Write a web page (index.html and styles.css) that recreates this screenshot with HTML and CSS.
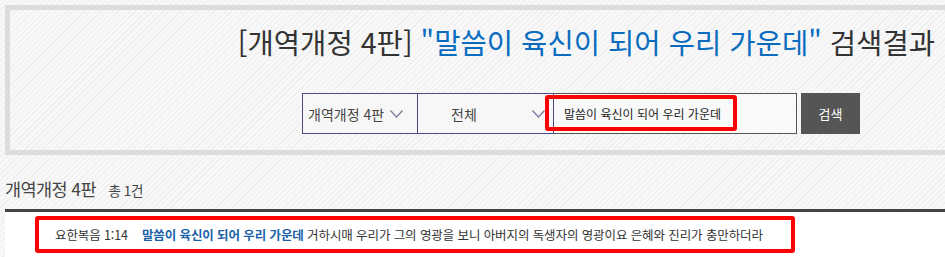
FILE: index.html
```html
<!DOCTYPE html>
<html lang="ko">
	<head>
		<meta charset="utf-8">
		<title>검색결과</title>
		<link rel="stylesheet" href="styles.css">
	</head>
	<body>
		<div class="search-box">
			<h1 class="search-title">[개역개정 4판] <span class="keyword">"말씀이 육신이 되어 우리 가운데"</span> 검색결과</h1>
			<form class="search-row">
				<div class="select select-version">
					<span>개역개정 4판</span>
					<svg class="chevron" width="13" height="8" viewBox="0 0 13 8"><polyline points="0.5,0.5 6.5,7 12.5,0.5" /></svg>
				</div>
				<div class="select select-book">
					<span>전체</span>
					<svg class="chevron" width="13" height="8" viewBox="0 0 13 8"><polyline points="0.5,0.5 6.5,7 12.5,0.5" /></svg>
				</div>
				<div class="search-input">말씀이 육신이 되어 우리 가운데</div>
				<div class="search-btn">검색</div>
				<div class="mark mark-input"></div>
			</form>
		</div>

		<div class="result-head">
			<span class="result-version">개역개정 4판</span>
			<span class="result-count">총 1건</span>
		</div>
		<div class="result-list">
			<p class="result-item"><span class="verse-ref">요한복음 1:14</span><b class="hit">말씀이 육신이 되어 우리 가운데</b> 거하시매 우리가 그의 영광을 보니 아버지의 독생자의 영광이요 은혜와 진리가 충만하더라</p>
		</div>
	</body>
</html>
```

FILE: styles.css
```css
body {
	margin: 0;
	font-family: "Noto Sans CJK KR", "Noto Sans", sans-serif;
	color: #333;
	background: repeating-linear-gradient(135deg, #f8f8f8 0px, #f8f8f8 3px, #eeeeee 3px, #eeeeee 4px);
}
.search-box {
	margin: 5px 0 0 5px;
	border: 5px solid #dcdcdc;
	border-right: none;
	padding-top: 12px;
	box-sizing: border-box;
	height: 150px;
	position: relative;
}
.search-title {
	margin: 0;
	padding-right: 10px;
	text-align: right;
	font-size: 28.6px;
	font-weight: normal;
	line-height: 40px;
	color: #333;
	white-space: nowrap;
}
.keyword {
	color: #0a6cbf;
}
.search-row {
	position: relative;
	display: flex;
	margin: 31px 0 0 292px;
	height: 41px;
}
.select {
	display: flex;
	align-items: center;
	box-sizing: border-box;
	border: 1px solid #4b4b86;
	font-size: 14px;
	color: #444;
	background: #f7f7f7;
}
.select-version {
	width: 116px;
	padding-left: 5px;
	gap: 6px;
}
.select-book {
	width: 135px;
	border-left: none;
	border-right: none;
	padding: 0 8px 0 33px;
	justify-content: space-between;
}
.chevron {
	fill: none;
	stroke: #7d7d9e;
	stroke-width: 1.3;
}
.search-input {
	width: 244px;
	box-sizing: border-box;
	border: 1px solid #555;
	border-left: 1px solid #4b4b86;
	padding-left: 10px;
	display: flex;
	align-items: center;
	font-size: 12px;
	color: #222;
	background: #f9f9f9;
}
.search-btn {
	margin-left: 4px;
	width: 59px;
	display: flex;
	align-items: center;
	justify-content: center;
	background: #555;
	color: #fff;
	font-size: 13px;
}
.mark {
	position: absolute;
	border: 4px solid #f00;
	border-radius: 3px;
	box-sizing: border-box;
}
.mark-input {
	left: 243px;
	top: 2px;
	width: 192px;
	height: 36px;
}
.result-head {
	margin: 22px 0 0 5px;
	padding-bottom: 7px;
	border-bottom: 3px solid #444;
	line-height: 24px;
	white-space: nowrap;
}
.result-version {
	font-size: 17.5px;
	letter-spacing: -0.6px;
	color: #444;
}
.result-count {
	margin-left: 8px;
	font-size: 13.5px;
	letter-spacing: -0.4px;
	color: #444;
}
.result-list {
	margin-left: 5px;
	padding: 4px 0 10px 30px;
	background: #fff;
}
.result-item {
	margin: 0;
	width: 760px;
	box-sizing: border-box;
	border: 4px solid #f00;
	border-radius: 3px;
	padding-left: 16px;
	line-height: 29px;
	font-size: 12.5px;
	letter-spacing: -0.1px;
	color: #333;
	white-space: nowrap;
}
.verse-ref {
	margin-right: 14px;
}
.hit {
	color: #1a5fa8;
	font-weight: bold;
}
```
